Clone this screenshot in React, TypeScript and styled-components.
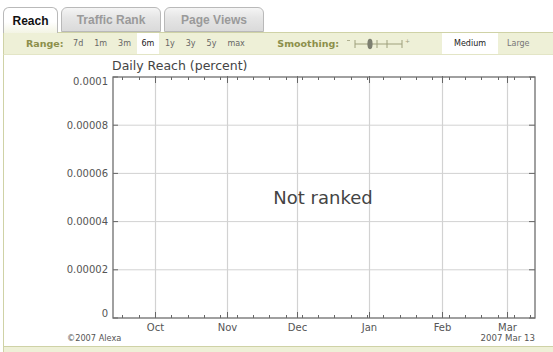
import React from 'react';
import styled, { createGlobalStyle } from 'styled-components';

const Olive = '#8c8f4a';
const BarGreen = '#eef0d7';
const BarBorder = '#cfd2a6';
const TabBorder = '#b9b9b9';

const GlobalStyle = createGlobalStyle`
  html, body {
    margin: 0;
    padding: 0;
    background: #ffffff;
  }
  body {
    width: 553px;
    height: 352px;
    overflow: hidden;
    font-family: 'DejaVu Sans', Verdana, sans-serif;
  }
`;

const Page = styled.div`
  width: 553px;
  height: 352px;
  display: flex;
  flex-direction: column;
`;

const TabRow = styled.div`
  height: 32px;
  display: flex;
  align-items: flex-end;
  gap: 3px;
  padding-left: 3px;
  box-sizing: border-box;
`;

const Tab = styled.div<{ $active?: boolean; $width: number }>`
  width: ${(p) => p.$width}px;
  height: ${(p) => (p.$active ? 26 : 25)}px;
  margin-bottom: ${(p) => (p.$active ? -1 : 0)}px;
  box-sizing: border-box;
  border: 1px solid ${TabBorder};
  border-bottom: ${(p) => (p.$active ? 'none' : `1px solid ${TabBorder}`)};
  border-radius: 6px 6px 0 0;
  background: ${(p) =>
    p.$active
      ? 'linear-gradient(#ffffff 0%, #ffffff 55%, #f3f4e4 100%)'
      : 'linear-gradient(#f5f5f5 0%, #e6e6e6 40%, #dadada 100%)'};
  display: flex;
  align-items: center;
  justify-content: center;
  font-family: 'Liberation Sans', Arial, sans-serif;
  font-weight: bold;
  font-size: 12px;
  color: ${(p) => (p.$active ? '#111111' : '#9a9a9a')};
  position: relative;
  z-index: ${(p) => (p.$active ? 2 : 1)};
`;

const Bar = styled.div`
  height: 23px;
  box-sizing: border-box;
  margin-left: 3px;
  border-top: 1px solid ${BarBorder};
  border-left: 1px solid ${BarBorder};
  border-bottom: 1px solid #e3e5c6;
  background: ${BarGreen};
  display: flex;
  align-items: stretch;
  font-size: 8px;
  color: #555555;
`;

const BarLabel = styled.span<{ $left: number }>`
  display: flex;
  align-items: center;
  margin-left: ${(p) => p.$left}px;
  font-weight: bold;
  font-size: 9.5px;
  color: ${Olive};
`;

const RangeList = styled.div`
  display: flex;
  align-items: stretch;
  margin-left: 4px;
`;

const RangeItem = styled.span<{ $selected?: boolean }>`
  display: flex;
  align-items: center;
  padding: 0 ${(p) => (p.$selected ? 5 : 5.5)}px;
  background: ${(p) => (p.$selected ? '#ffffff' : 'transparent')};
  color: ${(p) => (p.$selected ? '#222222' : '#666666')};
`;

const SizeItem = styled.span<{ $selected?: boolean; $left: number; $width: number }>`
  display: flex;
  align-items: center;
  justify-content: ${(p) => (p.$selected ? 'center' : 'flex-start')};
  margin-left: ${(p) => p.$left}px;
  width: ${(p) => p.$width}px;
  background: ${(p) => (p.$selected ? '#ffffff' : 'transparent')};
  color: ${(p) => (p.$selected ? '#222222' : '#777777')};
`;

const SliderBox = styled.span`
  display: flex;
  align-items: center;
  margin-left: 7px;
`;

const ChartPanel = styled.div`
  flex: 1;
  margin-left: 3px;
  border-left: 1px solid ${BarBorder};
  display: flex;
`;

const Footer = styled.div`
  height: 6px;
  margin-left: 3px;
  box-sizing: border-box;
  border-top: 1px solid ${BarBorder};
  border-left: 1px solid ${BarBorder};
  background: ${BarGreen};
`;

const Slider = () => (
  <svg width="66" height="14" viewBox="0 0 66 14">
    <line x1="1" y1="3.5" x2="4" y2="3.5" stroke="#9ea07c" strokeWidth="0.8" />
    <line x1="9" y1="7" x2="56" y2="7" stroke="#9ea07c" strokeWidth="1.2" />
    {[9, 31, 41, 56].map((x) => (
      <line key={x} x1={x} y1="3" x2={x} y2="11" stroke="#9ea07c" strokeWidth="1" />
    ))}
    <ellipse cx="24" cy="7" rx="2.6" ry="5.2" fill="#7d7f70" />
    <text x="59" y="6" fontSize="6" fill="#9ea07c" fontFamily="DejaVu Sans, sans-serif">
      +
    </text>
  </svg>
);

const left = 113;
const right = 535;
const top = 78;
const bottom = 319;
const days = 181;
const dx = (d: number) => left + ((right - left) * d) / days;

const months = [
  { label: 'Oct', day: 18 },
  { label: 'Nov', day: 49 },
  { label: 'Dec', day: 79 },
  { label: 'Jan', day: 110 },
  { label: 'Feb', day: 141 },
  { label: 'Mar', day: 169 },
];

const yLabels = ['0.0001', '0.00008', '0.00006', '0.00004', '0.00002', '0'];

const Chart = () => {
  const step = (bottom - top) / 5;
  const sundays: number[] = [];
  for (let d = 4; d < days; d += 7) sundays.push(d);
  const majors = months.map((m) => m.day);

  return (
    <svg width="549" height="290" viewBox="4 56 549 290" fontFamily="'DejaVu Sans', Verdana, sans-serif">
      <text x="112" y="70.5" fontSize="12.5" fill="#444">
        Daily Reach (percent)
      </text>

      {/* horizontal grid */}
      {yLabels.map((l, i) => {
        const y = top + step * i;
        let ty = y + 3.5;
        if (i === 0) ty = y + 8;
        if (i === yLabels.length - 1) ty = y - 1;
        return (
          <g key={l}>
            {i > 0 && i < 5 && <line x1={left} y1={y} x2={right} y2={y} stroke="#d2d2d2" strokeWidth="1" />}
            <line x1={left} y1={y} x2={left + 5} y2={y} stroke="#666" strokeWidth="1" />
            <line x1={right - 6} y1={y} x2={right} y2={y} stroke="#666" strokeWidth="1" />
            <text x="108" y={ty} fontSize="10" fill="#555" textAnchor="end">
              {l}
            </text>
          </g>
        );
      })}

      {/* vertical grid + month labels */}
      {months.map((m) => {
        const x = Math.round(dx(m.day)) + 0.5;
        return (
          <g key={m.label}>
            <line x1={x} y1={top} x2={x} y2={bottom} stroke="#d2d2d2" strokeWidth="1.2" />
            <line x1={x} y1={top - 1} x2={x} y2={top + 6} stroke="#666" strokeWidth="1" />
            <line x1={x} y1={bottom - 6} x2={x} y2={bottom} stroke="#666" strokeWidth="1" />
            <text x={x} y="332" fontSize="10" fill="#555" textAnchor="middle">
              {m.label}
            </text>
          </g>
        );
      })}

      {/* weekly ticks */}
      {sundays
        .filter((d) => !majors.includes(d))
        .map((d) => {
          const x = Math.round(dx(d)) + 0.5;
          return (
            <g key={d}>
              <line x1={x} y1={top} x2={x} y2={top + 3} stroke="#666" strokeWidth="1" />
              <line x1={x} y1={bottom - 3} x2={x} y2={bottom} stroke="#666" strokeWidth="1" />
            </g>
          );
        })}

      {/* frame */}
      <rect x={left} y={top} width={right - left} height={bottom - top} fill="none" stroke="#6e6e6e" strokeWidth="1.3" />

      <text x="323" y="205" fontSize="18" fill="#444" textAnchor="middle">
        Not ranked
      </text>

      <text x="67" y="341.5" fontSize="8.2" fill="#555">
        ©2007 Alexa
      </text>
      <text x="535" y="341.5" fontSize="8.6" fill="#555" textAnchor="end">
        2007 Mar 13
      </text>
    </svg>
  );
};

const ranges = ['7d', '1m', '3m', '6m', '1y', '3y', '5y', 'max'];

export default function App() {
  return (
    <Page>
      <GlobalStyle />
      <TabRow>
        <Tab $active $width={55}>
          Reach
        </Tab>
        <Tab $width={100}>Traffic Rank</Tab>
        <Tab $width={100}>Page Views</Tab>
      </TabRow>
      <Bar>
        <BarLabel $left={22}>Range:</BarLabel>
        <RangeList>
          {ranges.map((r) => (
            <RangeItem key={r} $selected={r === '6m'}>
              {r}
            </RangeItem>
          ))}
        </RangeList>
        <BarLabel $left={27}>Smoothing:</BarLabel>
        <SliderBox>
          <Slider />
        </SliderBox>
        <SizeItem $selected $left={30} $width={56}>
          Medium
        </SizeItem>
        <SizeItem $left={9} $width={40}>
          Large
        </SizeItem>
      </Bar>
      <ChartPanel>
        <Chart />
      </ChartPanel>
      <Footer />
    </Page>
  );
}
